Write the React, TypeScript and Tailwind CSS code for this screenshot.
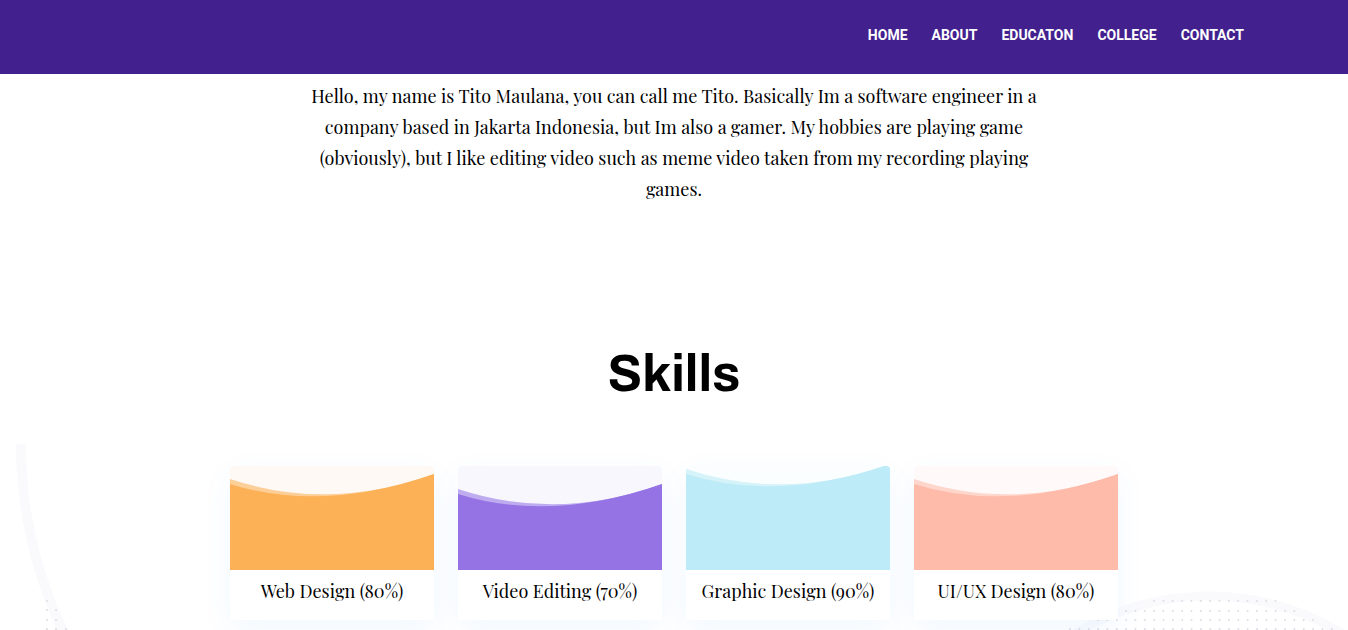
const links = ["Home", "About", "Educaton", "College", "Contact"];

type Skill = { name: string; level: number; fill: string; crest: string; sky: string; wave: number };

const skills: Skill[] = [
  { name: "Web Design", level: 80, fill: "#fdb157", crest: "#fdcf98", sky: "#fff9f5", wave: 10 },
  { name: "Video Editing", level: 70, fill: "#9573e5", crest: "#bfabef", sky: "#f8f7fe", wave: 20 },
  { name: "Graphic Design", level: 90, fill: "#bdebf7", crest: "#d5f3f9", sky: "#fbfefe", wave: 0 },
  { name: "UI/UX Design", level: 80, fill: "#ffbbaa", crest: "#ffd6cc", sky: "#fffaf9", wave: 10 },
];

function Wave({ skill }: { skill: Skill }) {
  return (
    <svg viewBox="0 0 204 104" preserveAspectRatio="none" className="block h-[104px] w-full" aria-hidden="true">
      <rect width="204" height="104" fill={skill.sky} />
      <g transform={`translate(0 ${skill.wave})`}>
        <path d="M0 3 Q100 36 204 -2 V120 H0Z" fill={skill.crest} />
        <path d="M0 8 Q92 37 204 -2 V120 H0Z" fill={skill.fill} />
      </g>
    </svg>
  );
}

function SkillCard({ skill }: { skill: Skill }) {
  return (
    <li className="rounded bg-white shadow-[0_10px_32px_rgba(0,140,255,0.06)]">
      <div className="overflow-hidden rounded-t">
        <Wave skill={skill} />
      </div>
      <h3 className="pt-[5px] pb-[13px] text-center text-lg leading-8">
        {skill.name} ({skill.level}%)
      </h3>
    </li>
  );
}

function LeftRing() {
  return (
    <svg className="absolute top-0 left-0 h-[186px] w-[100px]" viewBox="0 0 100 186" aria-hidden="true">
      <circle cx="458" cy="0" r="437" fill="none" stroke="#fafafd" strokeWidth="10" />
      {[
        [47, 157],
        [47, 166],
        [56, 166],
        [47, 176],
        [56, 176],
        [47, 185],
        [56, 185],
        [66, 185],
      ].map(([x, y]) => (
        <circle key={`${x}-${y}`} cx={x} cy={y} r="1" fill="#dedee2" />
      ))}
    </svg>
  );
}

const dotRows = [
  { y: 157, x: 1154, count: 14 },
  { y: 167, x: 1126, count: 19 },
  { y: 176, x: 1098, count: 24 },
  { y: 185, x: 1070, count: 29 },
];

function RightRing() {
  return (
    <svg className="absolute top-0 right-0 h-[186px] w-[300px]" viewBox="1048 0 300 186" aria-hidden="true">
      <circle cx="1209" cy="407" r="255" fill="none" stroke="#fafafd" strokeWidth="9" />
      {dotRows.map((row) =>
        Array.from({ length: row.count }, (_, i) => (
          <circle key={`${row.y}-${i}`} cx={row.x + i * 9.35} cy={row.y} r="1" fill="#dedee6" />
        )),
      )}
    </svg>
  );
}

export default function App() {
  return (
    <div className="flex min-h-screen flex-col bg-white font-['Playfair_Display','Liberation_Serif',serif] text-black">
      <header className="bg-[#42218e] font-['Roboto','Liberation_Sans',sans-serif]">
        <nav aria-label="Main" className="mx-auto flex h-[74px] max-w-[1140px] items-center justify-end gap-6 pb-1">
          {links.map((label) => (
            <a key={label} href={`#${label.toLowerCase()}`} className="text-sm font-bold text-white uppercase">
              {label}
            </a>
          ))}
        </nav>
      </header>

      <main className="flex flex-1 flex-col">
        <section id="about" className="px-4 pt-[7px]">
          <p className="mx-auto max-w-[736px] text-center text-lg leading-[31px]">
            Hello, my name is Tito Maulana, you can call me Tito. Basically Im a software engineer in a company based in
            Jakarta Indonesia, but Im also a gamer. My hobbies are playing game (obviously), but I like editing video such
            as meme video taken from my recording playing games.
          </p>
        </section>

        <section aria-labelledby="skills" className="flex flex-1 flex-col pt-[136px]">
          <h2
            id="skills"
            className="text-center font-['Archivo','Liberation_Sans',sans-serif] text-[51px] leading-[66px] font-bold"
          >
            Skills
          </h2>
          <div className="relative mt-[37px] flex-1 overflow-hidden px-6 pt-[22px] pb-2">
            <LeftRing />
            <RightRing />
            <ul className="relative mx-auto grid max-w-[888px] grid-cols-2 gap-6 md:grid-cols-4">
              {skills.map((skill) => (
                <SkillCard key={skill.name} skill={skill} />
              ))}
            </ul>
          </div>
        </section>
      </main>
    </div>
  );
}
